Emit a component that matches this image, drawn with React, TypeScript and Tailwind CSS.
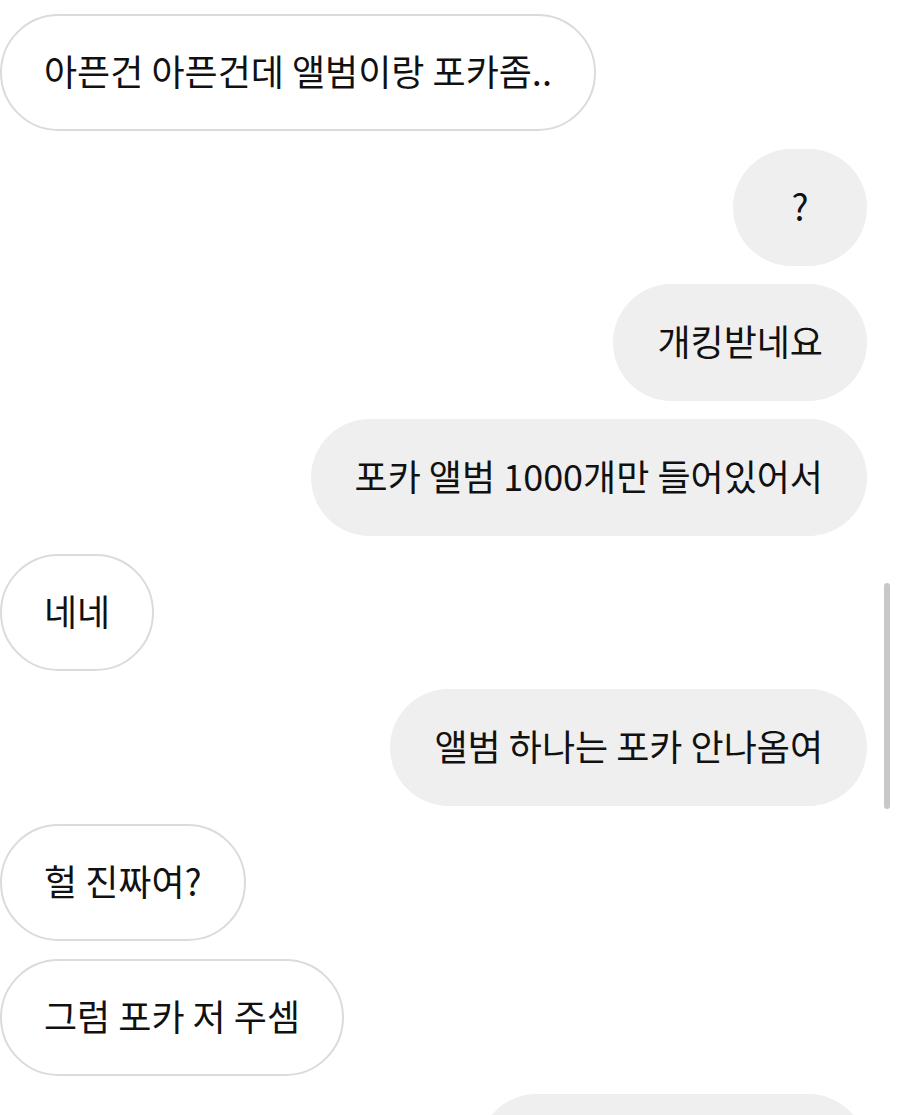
import React from "react";

type Msg = { text: string; me: boolean };

const msgs: Msg[] = [
  { text: "아픈건 아픈건데 앨범이랑 포카좀..", me: false },
  { text: "?", me: true },
  { text: "개킹받네요", me: true },
  { text: "포카 앨범 1000개만 들어있어서", me: true },
  { text: "네네", me: false },
  { text: "앨범 하나는 포카 안나옴여", me: true },
  { text: "헐 진짜여?", me: false },
  { text: "그럼 포카 저 주셈", me: false },
  { text: "\u00a0", me: true },
];

export default function App() {
  return (
    <div
      className="relative w-[900px] h-[1115px] overflow-hidden bg-white"
      style={{ fontFamily: '"Noto Sans CJK KR", "Noto Sans", sans-serif' }}
    >
      <div className="flex flex-col pt-[14px] pr-[33px]">
        {msgs.map((m, i) => (
          <div key={i} className={`flex mb-[18px] ${m.me ? "justify-end" : "justify-start"}`}>
            {m.me ? (
              <div
                className={`h-[117px] min-w-[134px] flex items-center justify-center rounded-full bg-[#efefef] text-[36px] text-[#111] px-[44px] pb-[6px] ${
                  i === msgs.length - 1 ? "w-[389px]" : ""
                }`}
              >
                {m.text}
              </div>
            ) : (
              <div className="h-[117px] flex items-center justify-center rounded-full border-2 border-[#dbdbdb] bg-white text-[36px] text-[#111] px-[42px] pb-[6px]">
                {m.text}
              </div>
            )}
          </div>
        ))}
      </div>
      <div className="absolute left-[884px] top-[583px] w-[6px] h-[226px] rounded-full bg-[#c8c8c8]" />
    </div>
  );
}
